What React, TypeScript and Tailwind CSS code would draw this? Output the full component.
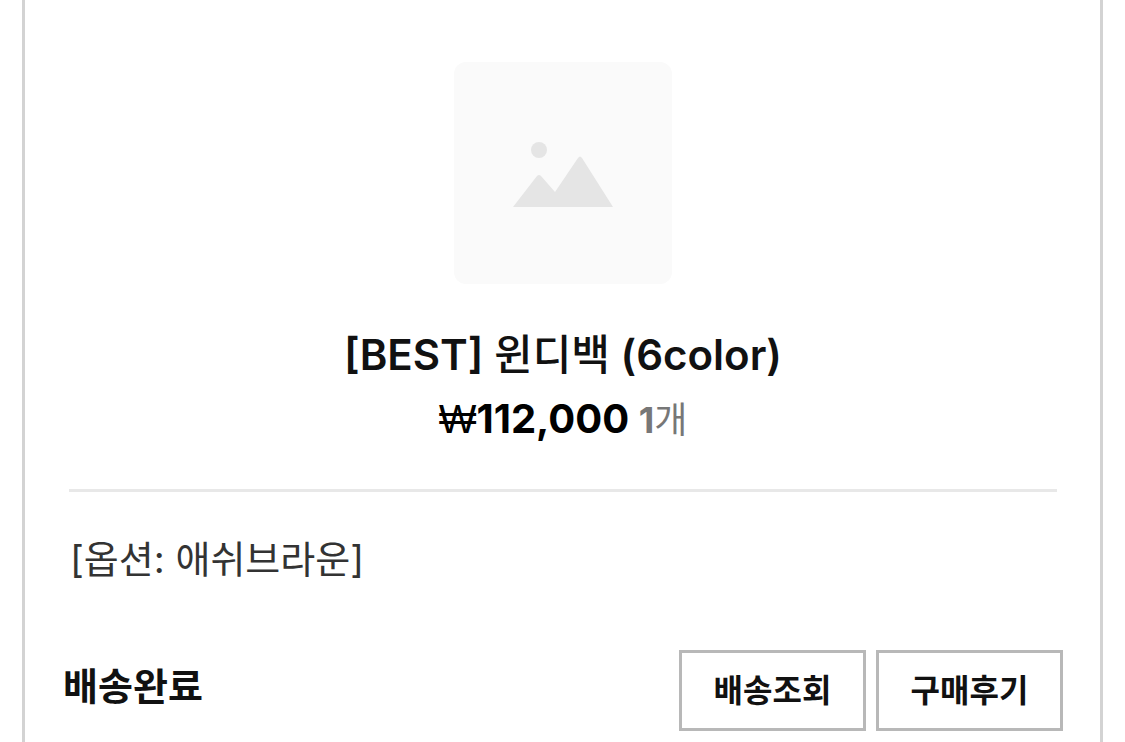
function ImagePlaceholder() {
  return (
    <div className="flex h-[222px] w-[218px] items-center justify-center rounded-xl bg-[#fafafa] pt-1">
      <svg
        viewBox="0 0 100 66"
        className="h-[66px] w-[100px] fill-[#e5e5e5]"
        aria-hidden="true"
      >
        <circle cx="26" cy="8" r="8" />
        <path d="M0 65 24 34Q26 32 28 34L42 50 65 16Q67 13 69 16L100 65Z" />
      </svg>
    </div>
  );
}

function ActionButton({ label }: { label: string }) {
  return (
    <button
      type="button"
      className="h-[81px] w-[187px] border-3 border-[#b8b8b8] bg-white text-[32px] font-bold text-[#111]"
    >
      {label}
    </button>
  );
}

export default function App() {
  return (
    <main className="bg-white px-[22px] font-['Inter','Noto_Sans_CJK_KR',sans-serif] text-[#111]">
      <article className="min-h-screen border-x-3 border-[#d3d3d3] pr-[37px] pl-[38px] pt-[62px]">
        {/* Product */}
        <section className="flex flex-col items-center">
          <ImagePlaceholder />
          <h1 className="mt-[39px] text-[42px] leading-[64px] font-semibold">
            [BEST] <span className="font-medium">윈디백</span> (6color)
          </h1>
          <p className="text-[40px] leading-[64px] font-bold text-black">
            <span className="font-['Liberation_Sans',sans-serif] font-normal">
              ₩
            </span>
            112,000{" "}
            <span className="text-[36px] text-[#777]">
              1<span className="font-normal">개</span>
            </span>
          </p>
        </section>

        <hr className="mx-[6px] mt-[37px] border-t-3 border-[#e8e8e8]" />

        <p className="mt-[35px] px-[7px] text-[38px] leading-[64px] text-[#333]">
          [옵션: 애쉬브라운]
        </p>

        {/* Delivery status */}
        <div className="mt-[59px] flex items-start justify-between">
          <strong className="text-[38px] leading-[72px] font-bold">
            배송완료
          </strong>
          <div className="flex gap-[10px]">
            <ActionButton label="배송조회" />
            <ActionButton label="구매후기" />
          </div>
        </div>
      </article>
    </main>
  );
}
